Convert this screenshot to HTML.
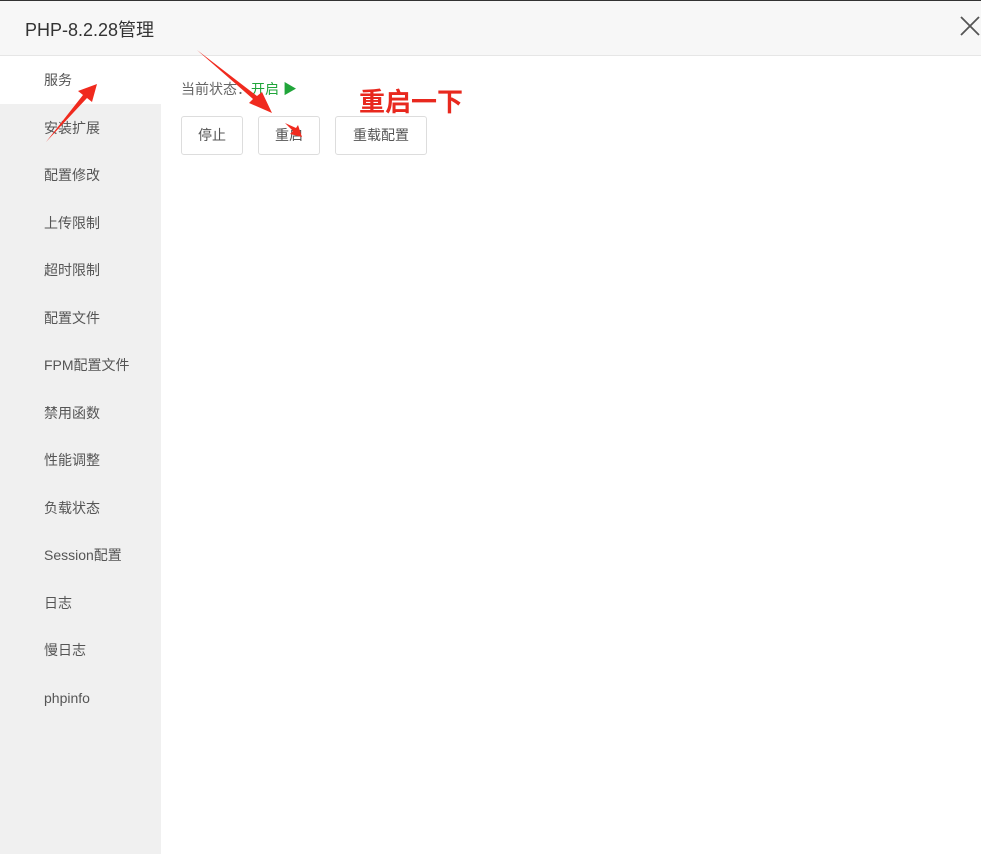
<!DOCTYPE html>
<html><head><meta charset="utf-8"><style>
body{margin:0;width:981px;height:854px;background:#fff;font-family:"Liberation Sans","Noto Sans CJK SC",sans-serif;position:relative;overflow:hidden}
.hd{position:absolute;left:0;top:0;width:981px;height:56px;background:#f7f7f7;border-bottom:1px solid #e6e6e6;border-top:1px solid #333;box-sizing:border-box}
.hd span{position:absolute;left:25px;top:15px;font-size:18px;color:#333}
.side{position:absolute;left:0;top:56px;width:161px;height:798px;background:#f0f0f0}
.it{position:absolute;left:0;width:161px;height:48px;line-height:48px;font-size:14px;color:#555;padding-left:44px;box-sizing:border-box}
.btn{position:absolute;top:116px;height:39px;border:1px solid #ddd;border-radius:3px;box-sizing:border-box;font-size:14px;color:#555;text-align:center;line-height:37px;background:#fff}
</style></head><body>
<div class="hd"><span>PHP-8.2.28管理</span>
<svg style="position:absolute;left:960px;top:15px" width="20" height="20"><path d="M1 1L19 19M19 1L1 19" stroke="#555" stroke-width="1.8"/></svg></div>
<div class="side">
<div class="it" style="top:0;background:#fff">服务</div>
<div class="it" style="top:48px">安装扩展</div>
<div class="it" style="top:95px">配置修改</div>
<div class="it" style="top:143px">上传限制</div>
<div class="it" style="top:190px">超时限制</div>
<div class="it" style="top:238px">配置文件</div>
<div class="it" style="top:285px">FPM配置文件</div>
<div class="it" style="top:333px">禁用函数</div>
<div class="it" style="top:380px">性能调整</div>
<div class="it" style="top:428px">负载状态</div>
<div class="it" style="top:475px">Session配置</div>
<div class="it" style="top:523px">日志</div>
<div class="it" style="top:570px">慢日志</div>
<div class="it" style="top:618px">phpinfo</div>
</div>
<div style="position:absolute;left:181px;top:79px;font-size:14px;color:#666">当前状态：<span style="color:#20a53a">开启 <span style="font-size:14px">▶</span></span></div>
<div style="position:absolute;left:359px;top:82px;font-size:26px;color:#e8281e;font-weight:bold">重启一下</div>
<div class="btn" style="left:181px;width:62px">停止</div>
<div class="btn" style="left:258px;width:62px">重启</div>
<div class="btn" style="left:335px;width:92px">重载配置</div>
<svg style="position:absolute;left:0;top:0" width="981" height="854">
<g fill="#f02a1e">
<polygon points="46,142 83,95 78,91 97,84 92,102 87,98"/>
<polygon points="197,50 253,99 249,103 272,113 262,92 257,96"/>
<polygon points="285,123 293,131 290,134 302,137 298,125 296,128"/>
</g></svg>
</body></html>
